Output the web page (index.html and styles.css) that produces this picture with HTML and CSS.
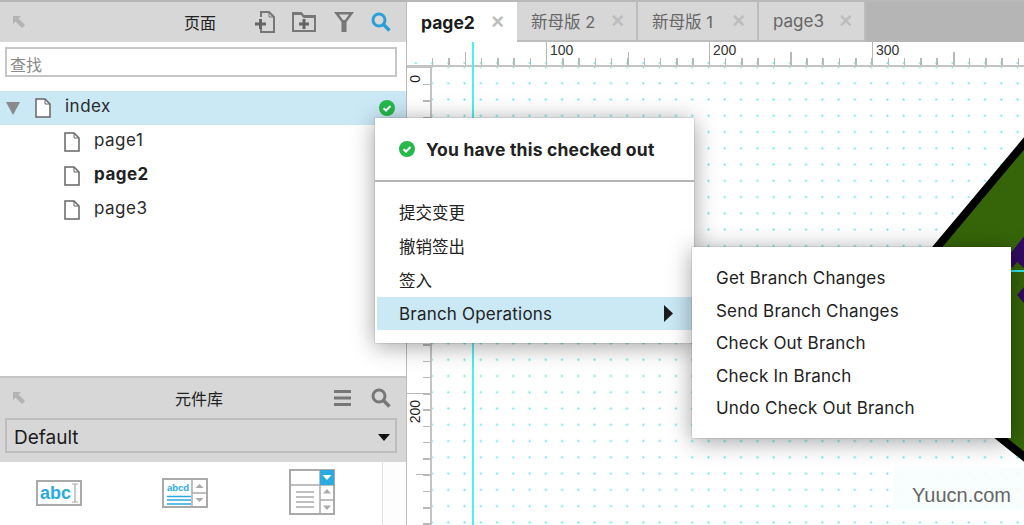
FILE: index.html
```html
<!DOCTYPE html>
<html lang="zh">
<head>
<meta charset="utf-8">
<title>Axure</title>
<link rel="stylesheet" href="styles.css">
</head>
<body>
<div class="app">
  <aside class="side">
    <div class="panel-head">
      <svg class="ic-back" width="14" height="14" viewBox="0 0 14 14"><path d="M1 1h8L6.500 3.500 13 10l-3 3-6.500-6.500L1 9z" fill="#b3b3b3"/></svg>
      <span class="panel-title pt-pages">页面</span>
      <svg class="ic ic-new" width="22" height="24" viewBox="0 0 22 24"><path d="M7 7V2h8l5 5v15H7v-3" fill="none" stroke="#777" stroke-width="2"/><path d="M15 2v5h5" fill="none" stroke="#777"/><path d="M1 14h11M6.500 9v10" stroke="#666" stroke-width="3"/></svg>
      <svg class="ic ic-fold" width="24" height="22" viewBox="0 0 24 22"><path d="M1 20V2h8l2 3h12v15z" fill="none" stroke="#777" stroke-width="2"/><path d="M1 3h9l2 3h11" fill="none" stroke="#777" stroke-width="2"/><path d="M7 13h10M12 8v10" stroke="#666" stroke-width="3"/></svg>
      <svg class="ic ic-filter" width="22" height="22" viewBox="0 0 22 22"><path d="M1 1h20L13.500 11v10h-5V11z" fill="#777"/><path d="M6 3.500h10l-4 5.500h-2z" fill="#d7d7d7"/></svg>
      <svg class="ic ic-search" width="20" height="20" viewBox="0 0 20 20"><circle cx="8" cy="8" r="6" fill="none" stroke="#2a9fd8" stroke-width="3"/><path d="M12.500 12.500L18.500 18.500" stroke="#2a9fd8" stroke-width="3.500"/></svg>
    </div>
    <div class="search-wrap"><input class="search" placeholder="查找"></div>
    <ul class="tree">
      <li class="row row-sel">
        <svg class="tri" width="14" height="13" viewBox="0 0 14 13"><path d="M0 0h14L7 13z" fill="#8a8a8a"/></svg>
        <svg class="file" width="16" height="20" viewBox="0 0 16 20"><path d="M1 1h9l5 5v13H1z" fill="#fff" stroke="#666" stroke-width="1.500"/><path d="M10 1v5h5" fill="none" stroke="#666"/></svg>
        <span class="row-name">index</span>
        <svg class="check check-row" width="16" height="16" viewBox="0 0 16 16"><circle cx="8" cy="8" r="8" fill="#27b84c"/><path d="M4.500 8.200L7 10.500 11.500 6" fill="none" stroke="#fff" stroke-width="2"/></svg>
      </li>
      <li class="row row-child">
        <svg class="file" width="16" height="20" viewBox="0 0 16 20"><path d="M1 1h9l5 5v13H1z" fill="#fff" stroke="#666" stroke-width="1.500"/><path d="M10 1v5h5" fill="none" stroke="#666"/></svg>
        <span class="row-name">page1</span>
      </li>
      <li class="row row-child">
        <svg class="file" width="16" height="20" viewBox="0 0 16 20"><path d="M1 1h9l5 5v13H1z" fill="#fff" stroke="#666" stroke-width="1.500"/><path d="M10 1v5h5" fill="none" stroke="#666"/></svg>
        <span class="row-name row-bold">page2</span>
      </li>
      <li class="row row-child">
        <svg class="file" width="16" height="20" viewBox="0 0 16 20"><path d="M1 1h9l5 5v13H1z" fill="#fff" stroke="#666" stroke-width="1.500"/><path d="M10 1v5h5" fill="none" stroke="#666"/></svg>
        <span class="row-name">page3</span>
      </li>
    </ul>
    <div class="lib-head">
      <div class="lib-top">
        <svg class="ic-back" width="14" height="14" viewBox="0 0 14 14"><path d="M1 1h8L6.500 3.500 13 10l-3 3-6.500-6.500L1 9z" fill="#b3b3b3"/></svg>
        <span class="panel-title pt-lib">元件库</span>
        <svg class="ic ic-menu" width="18" height="18" viewBox="0 0 18 18"><path d="M0 2.500h17M0 9h17M0 15.500h17" stroke="#777" stroke-width="3"/></svg>
        <svg class="ic ic-search2" width="20" height="20" viewBox="0 0 20 20"><circle cx="8" cy="8" r="6" fill="none" stroke="#777" stroke-width="3"/><path d="M12.500 12.500L18.500 18.500" stroke="#777" stroke-width="3.500"/></svg>
      </div>
      <div class="select"><span>Default</span><svg width="12" height="7" viewBox="0 0 12 7"><path d="M0 0h12L6 7z" fill="#111"/></svg></div>
    </div>
    <div class="widgets">
      <div class="widget w1">
        <div class="wbox wb-abc"><b>abc</b><svg width="6" height="20" viewBox="0 0 6 20"><path d="M0 1h6M0 19h6M3 1v18" stroke="#aaa" stroke-width="1.200" fill="none"/></svg></div>
      </div>
      <div class="widget w2">
        <svg width="46" height="30" viewBox="0 0 46 30"><rect x="1" y="1" width="44" height="28" fill="#fff" stroke="#aaa" stroke-width="2"/><path d="M30 1v28M30 15h15" stroke="#aaa" stroke-width="1.500"/><path d="M5 18.500h24M5 22h24M5 26h24" stroke="#29abe2" stroke-width="1.300"/><path d="M37.500 6l4 4h-8zM33.500 20h8l-4 4z" fill="#aaa"/><text x="5" y="13" class="abcd">abcd</text></svg>
      </div>
      <div class="widget w3">
        <svg width="46" height="46" viewBox="0 0 46 46"><rect x="1" y="1" width="44" height="44" fill="#fff" stroke="#aaa" stroke-width="2"/><path d="M1 16h44M31 1v44M31 31h14" stroke="#aaa" stroke-width="1.500"/><rect x="31" y="1" width="14" height="15" fill="#29abe2"/><path d="M33.500 6h9L38 11z" fill="#fff"/><path d="M7 23h18M7 28h18M7 33h18M7 38h18" stroke="#aaa" stroke-width="1.500"/><path d="M38 20l4 4.500h-8zM34 36.500h8L38 41z" fill="#aaa"/></svg>
      </div>
      <div class="scrollcol"></div>
    </div>
  </aside>

  <main class="work">
    <nav class="tabs">
      <div class="tab tab-on"><span>page2</span><i>×</i></div>
      <div class="tab t2"><span>新母版 2</span><i>×</i></div>
      <div class="tab t3"><span>新母版 1</span><i>×</i></div>
      <div class="tab t4"><span>page3</span><i>×</i></div>
    </nav>
    <div class="ruler-top">
      <span class="rt-label l1">100</span>
      <span class="rt-label l2">200</span>
      <span class="rt-label l3">300</span>
    </div>
    <div class="work-body">
      <div class="ruler-left">
        <span class="rl-label r0">0</span>
        <span class="rl-label r200">200</span>
      </div>
      <div class="canvas">
        <svg class="shape" width="593" height="459" viewBox="0 0 593 459">
          <polygon points="620,43 435,264 620,412" fill="#366509" stroke="#000" stroke-width="8"/>
          <path d="M598 162L573 193 580 201 585 195 592 201 598 201zM593 219L585 228 593 237z" fill="#320a60"/>
        </svg>
        <div class="guide-h"></div>
      </div>
    </div>
    <div class="guide-v"></div>
  </main>

  <div class="menu menu-main">
    <div class="menu-status">
      <svg class="check" width="16" height="16" viewBox="0 0 16 16"><circle cx="8" cy="8" r="8" fill="#27b84c"/><path d="M4.500 8.200L7 10.500 11.500 6" fill="none" stroke="#fff" stroke-width="2"/></svg>
      <b>You have this checked out</b>
    </div>
    <ul class="menu-list">
      <li>提交变更</li>
      <li>撤销签出</li>
      <li>签入</li>
      <li class="menu-hi">Branch Operations<svg width="9" height="17" viewBox="0 0 9 17"><path d="M0 0l9 8.500L0 17z" fill="#1c1c1c"/></svg></li>
    </ul>
  </div>
  <div class="menu menu-sub">
    <ul>
      <li>Get Branch Changes</li>
      <li>Send Branch Changes</li>
      <li>Check Out Branch</li>
      <li>Check In Branch</li>
      <li>Undo Check Out Branch</li>
    </ul>
  </div>
  <div class="watermark">Yuucn.com</div>
</div>
</body>
</html>
```
FILE: styles.css
```css
* { box-sizing: border-box; }
html, body { margin: 0; padding: 0; height: 100%; overflow: hidden; background: #fff; }
body { font-family: "Inter", "Noto Sans CJK SC", sans-serif; color: #222; }
ul { list-style: none; margin: 0; padding: 0; }
.app { position: relative; display: flex; width: 1024px; height: 525px; overflow: hidden; }

/* left panel */
.side { width: 407px; flex: none; display: flex; flex-direction: column; border-right: 1px solid #bbb; }
.panel-head { height: 42px; flex: none; display: flex; align-items: center; background: #d7d7d7; border-top: 2px solid #b5b5b5; padding-left: 12px; }
.panel-title { font-size: 16px; color: #222; font-family: "Noto Sans CJK SC", sans-serif; }
.pt-pages { margin-left: 158px; margin-right: 38px; }
.ic-new { margin-right: 16px; }
.ic-fold { margin-right: 17px; }
.ic-filter { margin-right: 16px; }
.search-wrap { height: 49px; flex: none; padding: 5px 9px 0 5px; }
.search { display: block; width: 392px; height: 30px; border: 2px solid #c6c6c6; padding: 3px 3px 0; font: 16px "Noto Sans CJK SC", sans-serif; outline: none; background: #fff; }
.search::placeholder { color: #8a8a8a; opacity: 1; }
.tree { flex: 1; }
.row { position: relative; height: 34px; display: flex; align-items: center; font-size: 17px; letter-spacing: 0.5px; }
.row-sel { background: #cbe8f5; padding-left: 6px; }
.row-sel .tri { margin-right: 15px; }
.row-sel .file { margin-right: 14px; }
.row-child { padding-left: 64px; }
.row-child .file { margin-right: 14px; }
.row-name { color: #2a2a2a; position: relative; top: -2px; }
.row-bold { font-weight: 700; color: #222; }
.check-row { position: absolute; left: 379px; top: 9px; }

.lib-head { height: 86px; flex: none; background: #d7d7d7; border-top: 2px solid #c4c4c4; padding: 0 9px 0 5px; }
.lib-top { height: 40px; display: flex; align-items: center; padding-left: 7px; }
.pt-lib { margin-left: 149px; margin-right: 111px; }
.ic-menu { margin-right: 19px; }
.select { height: 35px; width: 392px; border: 2px solid #bdbdbd; display: flex; align-items: center; justify-content: space-between; padding: 3px 5px 0 7px; font-size: 19px; color: #1c1c1c; }
.select svg { margin-top: 1px; }
.widgets { position: relative; flex: none; height: 63px; background: #fff; }
.widget { position: absolute; }
.w1 { left: 36px; top: 18px; }
.w2 { left: 162px; top: 16px; }
.w3 { left: 289px; top: 7px; }
.wbox { width: 46px; height: 26px; border: 2px solid #aaa; display: flex; align-items: center; justify-content: center; gap: 1px; }
.wbox b { font: 700 18px "Liberation Sans", sans-serif; color: #29abe2; }
.abcd { font: 700 9.500px "Liberation Sans", sans-serif; fill: #29abe2; }
.scrollcol { position: absolute; left: 382px; top: 0; bottom: 0; width: 24px; border-left: 1px solid #e4e4e4; background: #fdfdfd; }

/* work area */
.work { position: relative; flex: 1; display: flex; flex-direction: column; min-width: 0; }
.tabs { height: 42px; flex: none; display: flex; background: #b5b5b5; border-top: 2px solid #b9b9b9; }
.tab { display: flex; align-items: center; justify-content: space-between; height: 40px; background: #d7d7d7; border-right: 2px solid #bdbdbd; border-bottom: 2px solid #bdbdbd; padding: 0 12px 0 14px; font-size: 16.500px; color: #666; }
.tab i { font: 700 22px "Liberation Sans", sans-serif; color: #bdbdbd; }
.tab span { font-family: "Inter", "Noto Sans CJK SC", sans-serif; }
.tab-on { width: 110px; background: #fff; border: 0; color: #1c1c1c; font-size: 17.500px; font-weight: 700; padding-right: 13px; }
.t2 { width: 121px; }
.t3 { width: 121px; }
.t4 { width: 107px; font-size: 17px; }

.ruler-top { position: relative; height: 25px; flex: none; border-bottom: 2px solid #c4c4c4; background-color: #fff;
  background-image:
    repeating-linear-gradient(90deg, #b8b8b8 0 1.500px, transparent 1.500px 162.700px),
    repeating-linear-gradient(90deg, #b8b8b8 0 1.500px, transparent 1.500px 16.270px),
    radial-gradient(circle at center, #66e6e6 0, #8ceeee 0.800px, rgba(255,255,255,0) 1.500px);
  background-size: 100% 13px, 100% 7px, 16.270px 4px;
  background-position: 58px bottom, 25px bottom, 17px 100%;
  background-repeat: no-repeat, no-repeat, repeat-x; }
.rt-label { position: absolute; top: 0; padding: 0 0 0 3px; height: 23px; border-left: 1.500px solid #b8b8b8; font: 14px "Liberation Sans", sans-serif; color: #333; line-height: 16px; }
.l1 { left: 139px; }
.l2 { left: 302px; }
.l3 { left: 465px; }

.work-body { flex: 1; display: flex; min-height: 0; }
.ruler-left { position: relative; width: 25px; flex: none; background-color: #fff; border-right: 2px solid #c4c4c4; border-top: 1px solid #c4c4c4;
  background-image:
    repeating-linear-gradient(180deg, #b8b8b8 0 1.500px, transparent 1.500px 162.700px),
    repeating-linear-gradient(180deg, #b8b8b8 0 1.500px, transparent 1.500px 162.700px),
    repeating-linear-gradient(180deg, #b8b8b8 0 1.500px, transparent 1.500px 16.270px);
  background-size: 100% 100%, 14px 100%, 7px 100%;
  background-position: 0 325px, right 0 top 406px, right 0 top 16px;
  background-repeat: no-repeat; }
.rl-label { position: absolute; left: 2px; writing-mode: vertical-rl; transform: rotate(180deg); font: 14px "Liberation Sans", sans-serif; color: #222; line-height: 13px; }
.r0 { top: 7px; }
.r200 { top: 332px; }
.canvas { position: relative; flex: 1; min-width: 0; background-color: #fff;
  background-image: radial-gradient(circle at center, #66e6e6 0, #8ceeee 0.800px, rgba(255,255,255,0) 1.500px);
  background-size: 16.270px 16.270px;
  background-position: 8.100px 8.100px; }
.shape { position: absolute; left: 0; top: 0; display: block; }
.guide-h { position: absolute; left: 0; right: 0; top: 203px; height: 2px; background: #35e8e8; }
.guide-v { position: absolute; left: 65px; top: 42px; bottom: 0; width: 2px; background: #46f2f2; }

/* menus */
.menu { position: absolute; background: #fff; box-shadow: 0 3px 22px rgba(0,0,0,.38), 0 0 1px rgba(0,0,0,.45); font-size: 17px; color: #222; letter-spacing: 0.2px; }
.menu-main { left: 375px; top: 118px; width: 319px; height: 225px; }
.menu-status { height: 64px; display: flex; align-items: center; gap: 11px; padding: 0 24px; border-bottom: 2px solid #b5b5b5; font-size: 17.500px; }
.menu-list { padding-top: 13px; }
.menu-list li { height: 34px; display: flex; align-items: center; justify-content: space-between; padding: 0 19px 0 22px; margin: 0 2px; font-size: 16.500px; letter-spacing: 0; }
.menu-list .menu-hi { background: #cbe8f5; height: 33px; font-size: 17px; letter-spacing: 0.2px; }
.menu-sub { left: 692px; top: 247px; width: 319px; height: 191px; padding: 15px 0 0 24px; }
.menu-sub li { height: 32.500px; display: flex; align-items: center; }
.watermark { position: absolute; left: 893px; top: 468px; width: 131px; height: 42px; background: rgba(247,253,253,.92); display: flex; align-items: center; justify-content: flex-end; padding: 12px 13px 0 0; font: 20px "Liberation Sans", sans-serif; color: #666; }
```
